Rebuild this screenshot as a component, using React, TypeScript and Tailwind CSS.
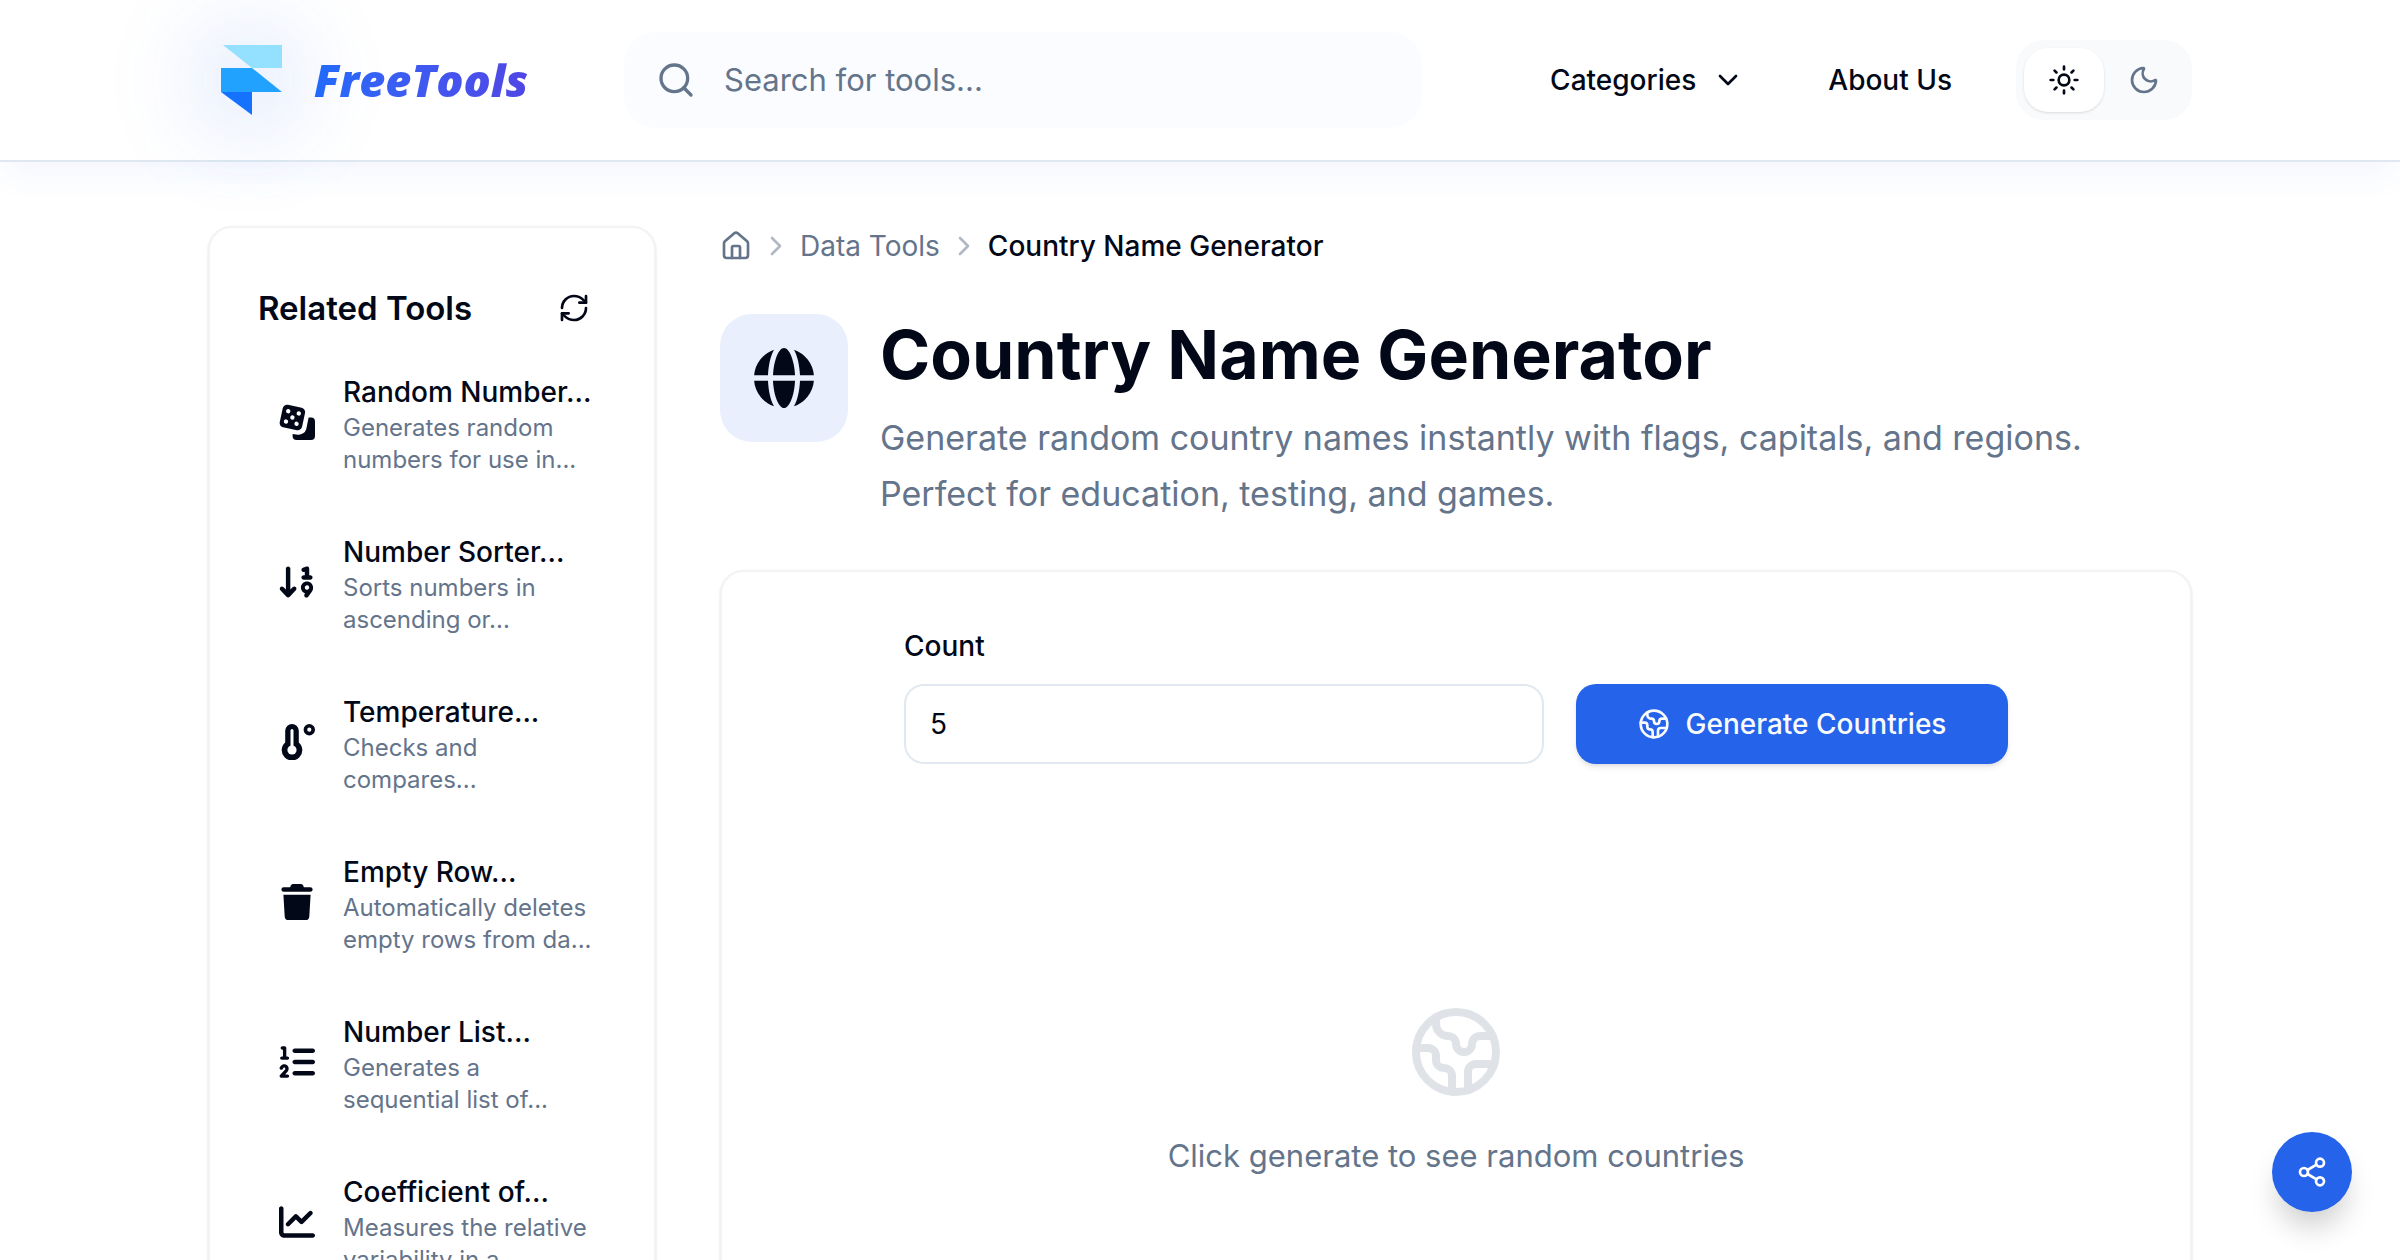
import { useState } from 'react';
import { ChevronDown, ChevronRight, Earth, House, Moon, RefreshCw, Search, Share2, Sun } from 'lucide-react';
import { FaArrowDown19, FaChartLine, FaListOl } from 'react-icons/fa6';

type IconProps = { className?: string };

function GlobeIcon({ className }: IconProps) {
  return (
    <svg viewBox="0 0 60 60" className={className} fill="currentColor">
      <path d="M19 27.3C19.6 13 24.5 0 30 0s10.4 13 11 27.3Z" />
      <path d="M19 32.7C19.6 47 24.5 60 30 60s10.4-13 11-27.3Z" />
      <path d="M.1 27.3A30 30 0 0 1 20 1.7C16.5 8 14.5 17 14 27.3Z" />
      <path d="M59.9 27.3A30 30 0 0 0 40 1.7C43.5 8 45.5 17 46 27.3Z" />
      <path d="M.1 32.7A30 30 0 0 0 20 58.3C16.5 52 14.5 43 14 32.7Z" />
      <path d="M59.9 32.7A30 30 0 0 1 40 58.3C43.5 52 45.5 43 46 32.7Z" />
    </svg>
  );
}

function DiceIcon({ className }: IconProps) {
  return (
    <svg viewBox="0 0 36 36" className={className} fill="currentColor">
      <g transform="rotate(12 13.3 13.5)">
        <rect x="2" y="2" width="22.8" height="23" rx="4.4" />
        <g fill="#fff">
          <circle cx="8" cy="8.2" r="2.2" />
          <circle cx="18.8" cy="8.2" r="2.2" />
          <circle cx="13.4" cy="13.5" r="2.2" />
          <circle cx="8" cy="18.8" r="2.2" />
          <circle cx="18.8" cy="18.8" r="2.2" />
        </g>
      </g>
      <path d="M29.6 13.6H32a4 4 0 0 1 4 4V32a4 4 0 0 1-4 4H17.6a4 4 0 0 1-4-4v-1.9l5.2.6a8 8 0 0 0 8.5-5.8Z" />
    </svg>
  );
}

function ThermometerIcon({ className }: IconProps) {
  return (
    <svg viewBox="0 0 36 36" className={className} fill="currentColor">
      <path d="M6.2 6.8a6.8 6.8 0 0 1 13.6 0v11.6a10.3 10.3 0 1 1-13.6 0Z" />
      <path d="M13 6.5V26" stroke="#fff" strokeWidth="3" strokeLinecap="round" />
      <circle cx="13" cy="26" r="4.6" fill="#fff" />
      <circle cx="30.3" cy="5.7" r="3.9" fill="none" stroke="currentColor" strokeWidth="3.6" />
    </svg>
  );
}

function TrashIcon({ className }: IconProps) {
  return (
    <svg viewBox="0 0 36 36" className={className} fill="currentColor">
      <path d="M11 4 11.8 1.6A2.4 2.4 0 0 1 14 0h8a2.4 2.4 0 0 1 2.2 1.6L25 4Z" />
      <rect x="2.4" y="3.2" width="31.2" height="4.6" rx="2.3" />
      <path d="M4.4 10.8h27.2l-1.3 21.6a3.8 3.8 0 0 1-3.8 3.6h-17a3.8 3.8 0 0 1-3.8-3.6Z" />
    </svg>
  );
}

const relatedTools = [
  { name: 'Random Number...', desc: ['Generates random', 'numbers for use in...'], icon: DiceIcon, size: 'size-9' },
  { name: 'Number Sorter...', desc: ['Sorts numbers in', 'ascending or...'], icon: FaArrowDown19, size: 'size-10' },
  { name: 'Temperature...', desc: ['Checks and', 'compares...'], icon: ThermometerIcon, size: 'size-9' },
  { name: 'Empty Row...', desc: ['Automatically deletes', 'empty rows from da...'], icon: TrashIcon, size: 'size-9' },
  { name: 'Number List...', desc: ['Generates a', 'sequential list of...'], icon: FaListOl, size: 'size-9' },
  { name: 'Coefficient of...', desc: ['Measures the relative', 'variability in a...'], icon: FaChartLine, size: 'size-9' },
];

function Logo() {
  return (
    <a href="#" className="relative flex items-center gap-8 pl-3">
      <span className="pointer-events-none absolute -left-6 -top-7 size-32 rounded-full bg-[#2563eb]/10 blur-2xl" />
      <svg viewBox="0 0 62 72" className="relative h-18 w-[62px] shrink-0">
        <path d="M3 1h59v23H32Z" fill="#94e0ff" />
        <path d="M1 24h31l30 24H1Z" fill="#22a2ff" />
        <path d="M1 48h31v23Z" fill="#1572ff" />
      </svg>
      <span className="relative bg-linear-to-r from-[#1f6bfb] to-[#4f46e5] bg-clip-text font-['Open_Sans',sans-serif] text-[45px] leading-14 font-extrabold italic text-transparent">
        FreeTools
      </span>
    </a>
  );
}

function Header() {
  return (
    <header className="relative z-10 border-b-2 border-[#dfe8f1] bg-white shadow-[0_20px_30px_-6px_rgba(37,99,235,0.05)]">
      <div className="flex h-40 items-center px-52">
        <div className="w-[416px] shrink-0">
          <Logo />
        </div>
        <label className="flex h-24 w-[798px] items-center gap-7 rounded-[32px] bg-[#fafcff] px-8 text-[#64748b]">
          <Search className="size-10 shrink-0" />
          <input
            type="text"
            aria-label="Search for tools"
            placeholder="Search for tools..."
            className="w-full bg-transparent text-[31px] outline-none placeholder:text-[#64748b]"
          />
        </label>
        <nav className="ml-auto flex items-center text-[28px] font-medium">
          <button className="flex items-center gap-4">
            Categories
            <ChevronDown className="size-8" />
          </button>
          <a href="#" className="ml-21">About Us</a>
          <div className="ml-16 flex h-20 items-center rounded-[28px] bg-[#f8fafc] p-2">
            <button aria-label="Light" className="flex h-16 w-20 items-center justify-center rounded-3xl bg-white shadow-sm">
              <Sun className="size-8" />
            </button>
            <button aria-label="Dark" className="flex h-16 w-20 items-center justify-center text-[#64748b]">
              <Moon className="size-8" />
            </button>
          </div>
        </nav>
      </div>
    </header>
  );
}

function RelatedTools() {
  return (
    <aside className="w-[448px] shrink-0 rounded-3xl border-2 border-[#f2f3f5] bg-white p-12 shadow-sm">
      <div className="flex h-16 items-center justify-between">
        <h2 className="text-[33px] leading-10 font-semibold">Related Tools</h2>
        <button aria-label="Refresh" className="flex size-16 items-center justify-center">
          <RefreshCw className="size-8" />
        </button>
      </div>
      <ul className="mt-2 flex flex-col gap-2">
        {relatedTools.map(({ name, desc, icon: Icon, size }) => (
          <li key={name}>
            <a href="#" className="flex items-start gap-7 whitespace-nowrap px-[21px] py-6">
              <span className="mt-8 flex size-9 shrink-0 items-center justify-center">
                <Icon className={`${size} shrink-0`} />
              </span>
              <span>
                <span className="block text-[28px] leading-10 font-medium">{name}</span>
                {desc.map((line) => (
                  <span key={line} className="block text-2xl leading-8 text-[#64748b]">{line}</span>
                ))}
              </span>
            </a>
          </li>
        ))}
      </ul>
    </aside>
  );
}

export default function App() {
  const [count, setCount] = useState('5');

  return (
    <div className="min-h-screen bg-white font-['Inter',sans-serif] text-[#020817]">
      <Header />
      <div className="flex gap-16 px-52 py-16">
        <RelatedTools />
        <main className="flex min-w-0 flex-1 flex-col">
          <nav className="flex h-10 items-center gap-2 text-[28px] text-[#64748b]">
            <a href="#" aria-label="Home"><House className="size-8" /></a>
            <ChevronRight className="size-8 opacity-50" />
            <a href="#">Data Tools</a>
            <ChevronRight className="size-8 opacity-50" />
            <span className="font-medium text-[#020817]">Country Name Generator</span>
          </nav>

          <div className="mt-12 flex items-start gap-8">
            <div className="flex size-32 shrink-0 items-center justify-center rounded-[32px] bg-[#e9effd]">
              <GlobeIcon className="size-15" />
            </div>
            <div className="max-w-[1240px]">
              <h1 className="text-[68px] leading-20 font-bold">Country Name Generator</h1>
              <p className="mt-4 text-[34px] leading-14 text-[#64748b]">
                Generate random country names instantly with flags, capitals, and regions. Perfect for education, testing, and games.
              </p>
            </div>
          </div>

          <section className="mt-12 flex-1 rounded-3xl border-2 border-[#f2f3f5] bg-white px-[182px] pt-14 shadow-sm">
            <label htmlFor="count" className="block text-[28px] leading-9 font-medium">Count</label>
            <div className="mt-5 flex gap-8">
              <input
                id="count"
                type="text"
                inputMode="numeric"
                value={count}
                onChange={(e) => setCount(e.target.value)}
                className="h-20 min-w-0 flex-1 rounded-[20px] border-2 border-[#e2e8f0] px-6 text-[28px] outline-none"
              />
              <button className="flex h-20 w-[432px] items-center justify-center gap-4 rounded-[20px] bg-[#2563eb] text-[28px] font-medium text-[#f8fafc] shadow-md">
                <Earth className="size-8" />
                Generate Countries
              </button>
            </div>
            <div className="mt-60 flex flex-col items-center text-[#64748b]">
              <Earth className="size-24 opacity-20" />
              <p className="mt-8 text-[31px] leading-12">Click generate to see random countries</p>
            </div>
          </section>
        </main>
      </div>

      <button
        aria-label="Share"
        className="fixed right-12 bottom-12 z-20 flex size-20 items-center justify-center rounded-full bg-[#2563eb] text-white shadow-[0_20px_30px_-6px_rgba(0,0,0,0.2)]"
      >
        <Share2 className="size-8" />
      </button>
    </div>
  );
}
